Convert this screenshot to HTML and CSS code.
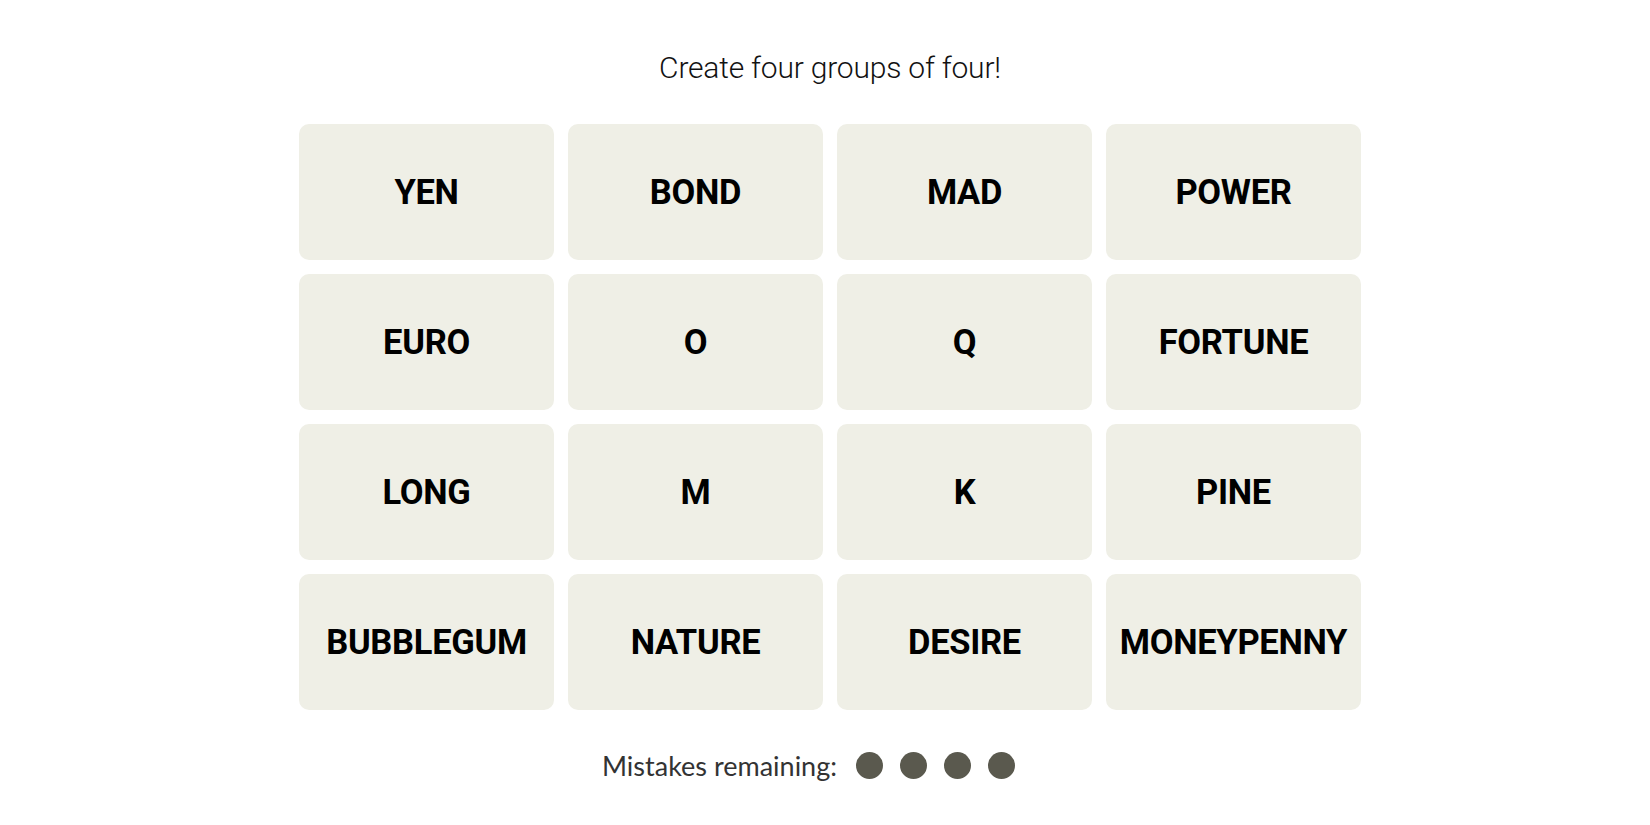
FILE: index.html
```html
<!DOCTYPE html>
<html>
<head>
<meta charset="utf-8">
<link rel="stylesheet" href="styles.css">
</head>
<body>
<main class="game">
  <p class="prompt">Create four groups of four!</p>
  <div class="board">
    <div class="tile">YEN</div>
    <div class="tile">BOND</div>
    <div class="tile">MAD</div>
    <div class="tile">POWER</div>
    <div class="tile">EURO</div>
    <div class="tile">O</div>
    <div class="tile">Q</div>
    <div class="tile">FORTUNE</div>
    <div class="tile">LONG</div>
    <div class="tile">M</div>
    <div class="tile">K</div>
    <div class="tile">PINE</div>
    <div class="tile">BUBBLEGUM</div>
    <div class="tile">NATURE</div>
    <div class="tile">DESIRE</div>
    <div class="tile">MONEYPENNY</div>
  </div>
  <div class="mistakes">
    <span class="mistakes-label">Mistakes remaining:</span>
    <span class="dots">
      <span class="dot"></span>
      <span class="dot"></span>
      <span class="dot"></span>
      <span class="dot"></span>
    </span>
  </div>
</main>
</body>
</html>
```

FILE: styles.css
```css
html, body {
  margin: 0;
  padding: 0;
  background: #ffffff;
}

.game {
  display: flex;
  flex-direction: column;
  align-items: center;
  padding-left: 10px;
  padding-top: 50px;
  font-family: Roboto, "Liberation Sans", sans-serif;
  color: #121212;
}

.prompt {
  margin: 0;
  font-size: 30px;
  font-weight: 300;
  line-height: 36px;
  letter-spacing: -0.2px;
}

.board {
  margin-top: 38px;
  display: grid;
  grid-template-columns: repeat(4, 255px);
  grid-auto-rows: 136px;
  gap: 14px;
}

.tile {
  background: #efefe6;
  border-radius: 10px;
  display: flex;
  align-items: center;
  justify-content: center;
  font-size: 34.5px;
  font-weight: 700;
  color: #000000;
  letter-spacing: -0.3px;
}

.mistakes {
  margin-top: 39px;
  margin-right: 43px;
  display: flex;
  align-items: center;
  gap: 19px;
}

.mistakes-label {
  font-family: Lato, Roboto, sans-serif;
  font-size: 27px;
  color: #333333;
}

.dots {
  display: flex;
  gap: 17px;
}

.dot {
  width: 27px;
  height: 27px;
  border-radius: 50%;
  background: #5a594e;
}
```
